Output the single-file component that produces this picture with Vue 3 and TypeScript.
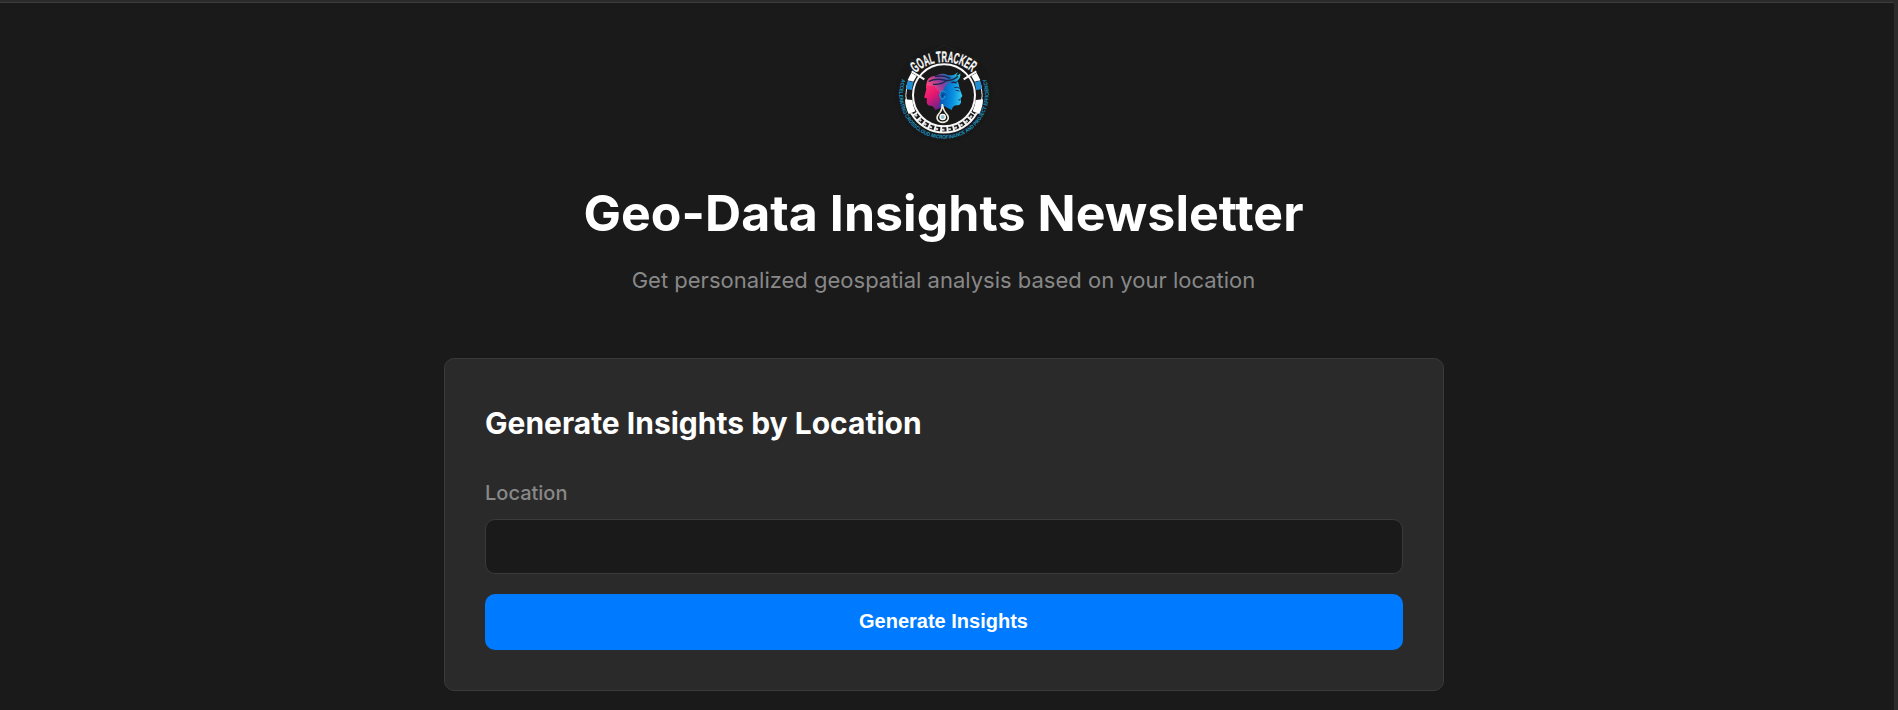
<script setup lang="ts">
import { ref } from 'vue'

const location = ref('')

function generateInsights() {
  location.value = location.value.trim()
}
</script>

<template>
  <div class="window">
    <main class="page">
      <header class="header">
        <svg class="logo" viewBox="0 0 360 345" role="img" aria-label="Goal Tracker">
          <defs>
            <linearGradient id="faceLeft" x1="0" y1="0" x2="0.6" y2="1">
              <stop offset="0" stop-color="#ff3a70" />
              <stop offset="0.5" stop-color="#e91770" />
              <stop offset="1" stop-color="#69248c" />
            </linearGradient>
            <linearGradient id="faceRight" x1="0" y1="0.3" x2="1" y2="0.4">
              <stop offset="0" stop-color="#0750ae" />
              <stop offset="0.6" stop-color="#078fe0" />
              <stop offset="1" stop-color="#35c8f0" />
            </linearGradient>
            <linearGradient id="hair" x1="0" y1="0.5" x2="1" y2="0.2">
              <stop offset="0" stop-color="#ff497b" />
              <stop offset="0.4" stop-color="#8d3d9c" />
              <stop offset="0.7" stop-color="#1474bd" />
              <stop offset="1" stop-color="#28cfe2" />
            </linearGradient>
            <path id="titleArc" d="M95 111 A128 128 0 0 1 267 111" />
            <path id="mottoArc" d="M54 129 A134 134 0 1 0 306 129" />
          </defs>
          <circle cx="179" cy="173" r="146" fill="#181818" />
          <path d="M76 72H99L180 27L260 64L284 72" fill="none" stroke="#242727" stroke-width="2" />
          <circle cx="180" cy="178" r="93" fill="#191919" stroke="#f8f8f8" stroke-width="6" />
          <!-- side segments -->
          <path d="M80 121A114 114 0 0 0 82 236M280 121A114 114 0 0 1 278 236" fill="none" stroke="#eee" stroke-width="3" />
          <path d="M83 106L121 130M277 106L239 130" stroke="#f8f8f8" stroke-width="6" />
          <path d="M82 110L98 120L88 137L71 132ZM278 110L262 120L272 137L289 132Z" fill="#fff" />
          <path d="M71 134L88 139L83 162L66 159ZM289 134L272 139L277 162L294 159Z" fill="#218dd4" />
          <path d="M63 190L85 192Q86 208 94 226L74 234Q63 211 63 190M297 190L275 192Q274 208 266 226L286 234Q297 211 297 190" fill="#fff" />
          <!-- lower band -->
          <path d="M82 232A112 112 0 0 0 278 232" fill="none" stroke="#f4f4f4" stroke-width="6" />
          <path d="M91 232A104 104 0 0 0 269 232" fill="none" stroke="#f4f4f4" stroke-width="18" stroke-dasharray="6 13" />
          <path d="M94 235A103 103 0 0 0 266 235" fill="none" stroke="#d8d8d8" stroke-width="6" stroke-dasharray="8 11" />
          <text class="logo-title">
            <textPath href="#titleArc" textLength="184" lengthAdjust="spacingAndGlyphs">GOAL TRACKER</textPath>
          </text>
          <text class="logo-motto">
            <textPath href="#mottoArc" textLength="514" lengthAdjust="spacingAndGlyphs">ACCELERATING CROSSCLOUD MICROFINANCE AND PROJECT EFFICIENCY</textPath>
          </text>
          <!-- twin profiles -->
          <path d="M132 140Q123 147 127 160L121 182Q120 187 129 187L128 199Q130 211 141 209Q150 211 154 222L176 213L180 150Z" fill="url(#faceLeft)" />
          <path d="M174 154Q192 130 222 137L227 158L235 179Q235 184 230 185L231 194Q232 207 220 208Q206 207 203 222L181 211L166 214Z" fill="url(#faceRight)" />
          <path d="M127 147Q127 120 156 119Q174 108 191 117Q209 121 222 109L216 119Q224 119 229 112Q231 130 214 138Q189 139 181 155L174 171Q160 166 151 149Q142 151 127 147Z" fill="url(#hair)" />
          <path d="M134 136Q157 126 180 132T222 121M147 145Q172 147 190 133M153 122Q175 116 199 127M202 140Q212 137 218 142" fill="none" stroke="#1c254c" stroke-width="4" />
          <path d="M186 171Q178 160 169 169Q163 180 173 190Q181 190 184 180" fill="#075caf" stroke="#18a7df" stroke-width="3" />
          <path d="M178 174L174 183" stroke="#102d63" stroke-width="3" />
          <path d="M211 155Q220 151 227 157M215 163L226 165M223 192L230 191" fill="none" stroke="#102e62" stroke-width="3" />
          <!-- drop -->
          <path d="M175 204Q175 223 164 234C153 248 163 259 176 259S199 248 188 234Q178 224 175 204Z" fill="#171717" stroke="#ede9db" stroke-width="5" />
          <circle cx="176" cy="243" r="8" fill="#93bfd4" stroke="#fff" stroke-width="4" />
        </svg>
        <h1>Geo-Data Insights Newsletter</h1>
        <p class="subtitle">Get personalized geospatial analysis based on your location</p>
      </header>

      <section class="card">
        <h2>Generate Insights by Location</h2>
        <form @submit.prevent="generateInsights">
          <label for="location">Location</label>
          <input id="location" v-model="location" type="text" />
          <button type="submit">Generate Insights</button>
        </form>
      </section>
    </main>
  </div>
</template>

<style>
body {
  margin: 0;
  overflow: hidden;
  background: #1a1a1a;
}
</style>

<style scoped>
.window {
  box-sizing: border-box;
  height: 710px;
  padding-top: 2px;
  border-right: 4px solid #2b2b2b;
  background: linear-gradient(#2b2b2b 2px, #3c3c3c 2px, #3c3c3c 3px, #1a1a1a 3px);
  font-family: Inter, sans-serif;
  color: #fff;
}

.page {
  width: 1000px;
  margin-left: 444px;
}

.header {
  display: flex;
  flex-direction: column;
  align-items: center;
  height: 356px;
  text-align: center;
}

.logo {
  flex: none;
  width: 120px;
  height: 115px;
  margin-top: 34px;
}

.logo-title {
  font: bold 46px "Liberation Sans", Arial, sans-serif;
  fill: #f8f8f8;
  stroke: #f8f8f8;
  stroke-width: 1px;
}

.logo-motto {
  font: bold 16px "Liberation Sans", Arial, sans-serif;
  fill: #1c9ccb;
}

h1 {
  margin: 32px 0 0;
  padding-right: 1px;
  font-size: 50px;
  font-weight: 700;
  line-height: 60px;
  letter-spacing: 0.05px;
  white-space: nowrap;
}

.subtitle {
  margin: 21px 0 0;
  padding-right: 1px;
  font-size: 22px;
  line-height: 32px;
  color: #888;
}

.card {
  box-sizing: border-box;
  height: 333px;
  padding: 40px;
  border: 1px solid #3a3a3a;
  border-radius: 10px;
  background: #2a2a2a;
}

h2 {
  margin: 4px 0 0;
  font-size: 30px;
  font-weight: 700;
  line-height: 40px;
}

form {
  display: flex;
  flex-direction: column;
}

label {
  margin-top: 35px;
  font-size: 20px;
  font-weight: 500;
  line-height: 30px;
  color: #888;
}

input {
  box-sizing: border-box;
  height: 55px;
  margin-top: 11px;
  padding: 0 16px;
  border: 1px solid #3a3a3a;
  border-radius: 10px;
  outline: none;
  background: #1a1a1a;
  font: 20px "Liberation Sans", Arial, sans-serif;
  color: #fff;
}

button {
  height: 56px;
  margin-top: 20px;
  padding: 0 1px 2px 0;
  border: none;
  border-radius: 10px;
  background: #007bff;
  font: bold 20px "Liberation Sans", Arial, sans-serif;
  color: #fff;
  cursor: pointer;
}
</style>
